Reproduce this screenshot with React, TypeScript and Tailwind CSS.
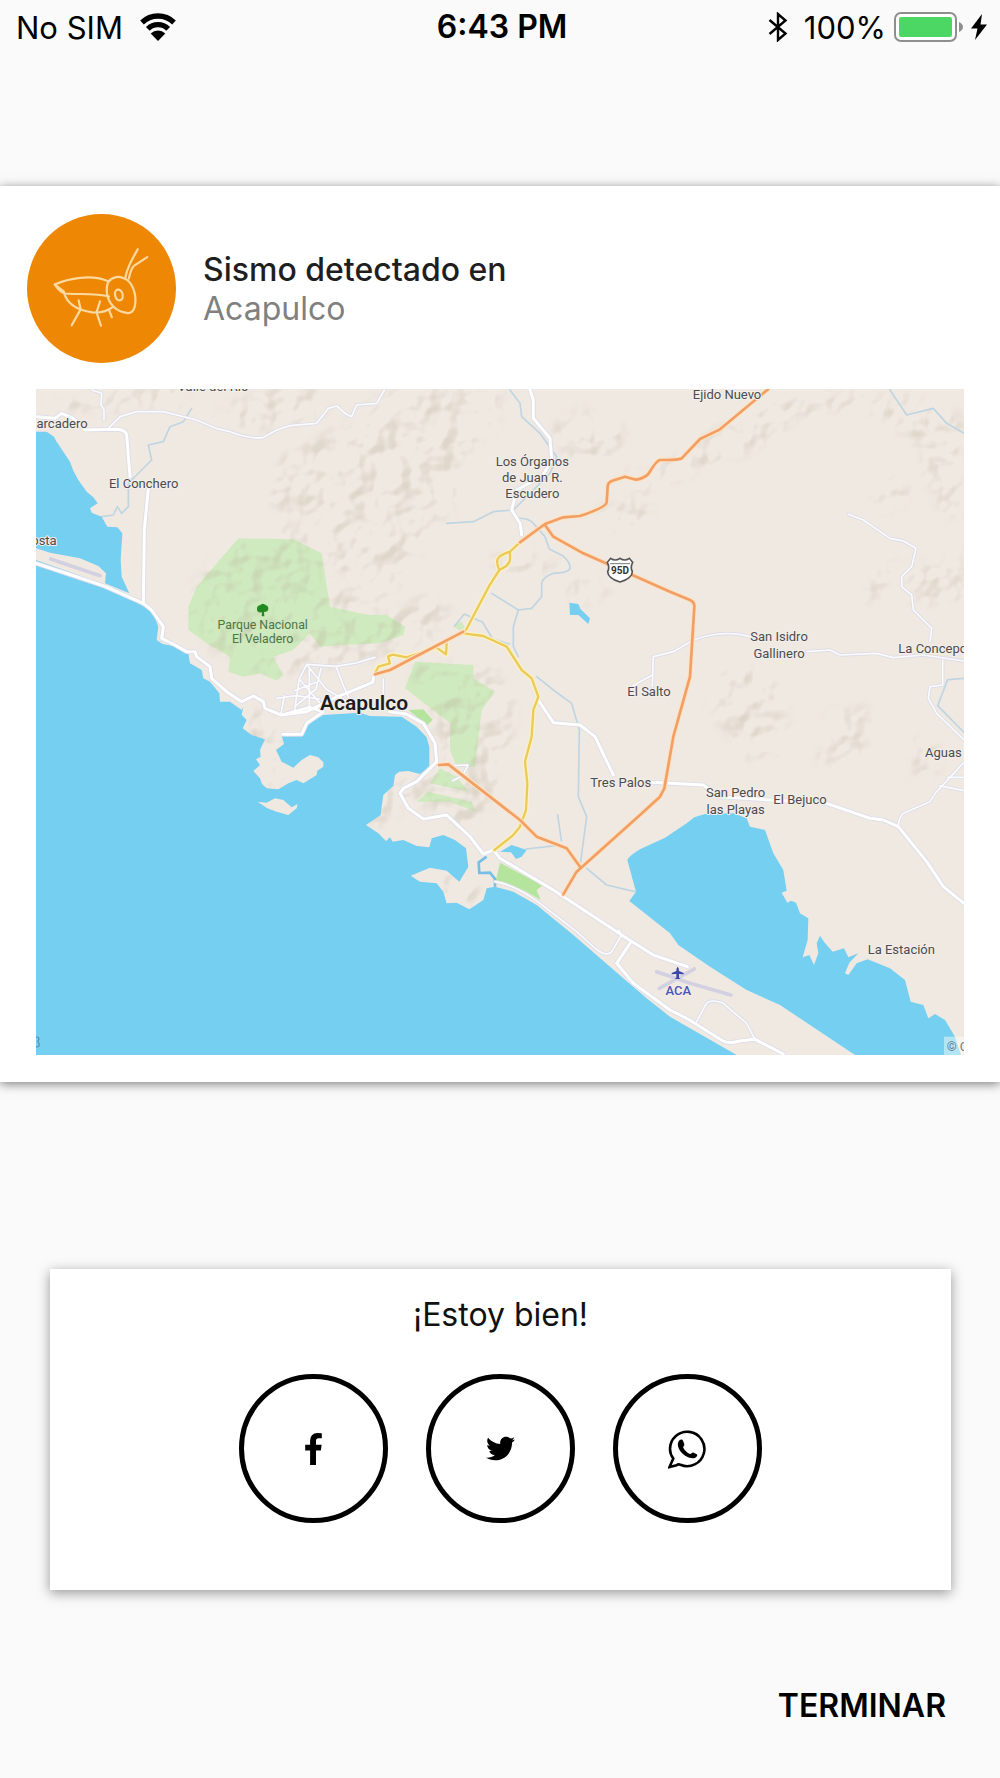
import type { ReactNode } from "react";
import { FaTwitter } from "react-icons/fa";

type LabelProps = {
  x: number;
  y: number;
  text: string;
  anchor?: "start" | "middle" | "end";
};

const labels: LabelProps[] = [
  { x: 531, y: 6, text: "Valle del Río" },
  { x: 155, y: 116, text: "arcadero", anchor: "end" },
  { x: 323, y: 298, text: "El Conchero" },
  { x: 62, y: 467, text: "osta", anchor: "end" },
  { x: 1489, y: 231, text: "Los Órganos" },
  { x: 1489, y: 279, text: "de Juan R." },
  { x: 1489, y: 328, text: "Escudero" },
  { x: 2073, y: 29, text: "Ejido Nuevo" },
  { x: 2229, y: 756, text: "San Isidro" },
  { x: 2229, y: 806, text: "Gallinero" },
  { x: 2587, y: 791, text: "La Concepc", anchor: "start" },
  { x: 1839, y: 921, text: "El Salto" },
  { x: 1754, y: 1193, text: "Tres Palos" },
  { x: 2099, y: 1225, text: "San Pedro" },
  { x: 2099, y: 1274, text: "las Playas" },
  { x: 2292, y: 1245, text: "El Bejuco" },
  { x: 2667, y: 1105, text: "Aguas", anchor: "start" },
  { x: 2596, y: 1694, text: "La Estación" },
];

const hills = [
  "M60 0H460L400 70L300 60L180 80L90 60Z",
  "M540 60L700 0H860L880 60L800 110L640 130Z",
  "M700 330L740 200L860 140L960 90L1060 0H1400L1380 120L1260 230L1300 330L1180 420L1130 560L1010 650L900 560L860 420L740 370Z",
  "M440 640L520 520L607 448L772 400L900 460L900 560L990 640L1107 690L1060 800L900 830L700 860L520 780Z",
  "M1160 620L1250 660L1180 760L980 790L1000 720Z",
  "M1540 120L1640 60L1790 130L1690 240L1600 220Z",
  "M1750 260L1900 210L1990 150L2200 40L2480 10L2520 40L2300 80L2160 180L2000 240L1800 320Z",
  "M1690 360L1830 300L1850 400L1760 480Z",
  "M1350 500L1540 490L1560 550L1400 560Z",
  "M1600 570L1760 570L1680 640L1590 630Z",
  "M2440 30L2600 10L2784 80V420L2700 350L2640 170L2560 100Z",
  "M2500 330L2570 260L2630 300L2560 380Z",
  "M2480 590L2580 480L2570 560L2500 650Z",
  "M2600 540L2784 500V640L2640 650Z",
  "M2050 860L2180 820L2260 960L2240 1090L2120 1110L2020 960Z",
  "M2380 970L2500 950L2480 1100L2340 1130Z",
  "M2620 1020L2720 1080L2690 1190L2630 1160Z",
  "M1120 820L1380 840L1440 960L1400 1180L1330 1330L1220 1290L1120 1240L1020 1330L1000 1290L1060 1180L1220 1140L1200 1020Z",
  "M1130 1450L1220 1440L1340 1500L1300 1560L1230 1520Z",
  "M620 980L690 940L740 1050L720 1180L680 1190L640 1060Z",
];

// Minor roads, drawn thin with a lilac casing
const streets = [
  "M167 3L197 13L195 48L204 62V93",
  "M217 118L252 83L302 68H382L482 93L540 118L582 128Q640 150 680 146L722 123L762 110L842 103L877 58L902 51L930 75L947 83L962 48L1022 43L1045 3",
  "M2437 376L2482 393L2562 448L2602 456L2640 478L2627 533L2597 563V593L2627 618L2632 663L2687 718L2682 758",
  "M1790 890L1849 858M1849 893L1852 803L1912 788L1972 753Q2062 720 2142 743",
  "M2312 788L2382 783L2412 798L2522 793L2572 806L2662 798L2784 816",
  "M2720 813V888L2682 893L2677 928L2702 973L2784 1053",
  "M2587 1308Q2590 1282 2602 1273L2682 1238L2700 1210L2784 1120M2710 1190L2784 1205M2735 1165H2784",
  "M1982 1898L2010 1845Q2024 1828 2062 1843L2132 1903L2157 1951",
  "M1377 1478Q1440 1488 1512 1543L1622 1628L1680 1680Q1712 1705 1727 1688L1757 1638L1748 1622",
  "M775 968L790 870L812 826L900 832L960 822L1017 805M812 826L870 900L930 935M790 870L850 940M775 905L840 880M820 840V960M855 838L840 900L780 950M900 832L922 890L940 930M722 928L780 920L850 930M735 975L745 920M1042 870V925",
  "M1250 1130L1296 1128L1280 1160L1250 1175",
];

const roads = [
  "M0 83L57 88L77 73L112 88L147 123L242 121Q268 122 272 138L282 263",
  "M337 298L325 423L322 643L347 663L382 713L377 748L417 768L452 788L477 788L482 803L522 833L527 868L572 908L617 938L652 921L682 938L687 958L735 978L812 968L900 925L1010 880L1014 860",
  "M0 523L112 560L207 592L322 643",
  "M740 1036H797L812 1003L862 968L820 955L740 978",
  "M1060 968L1110 975L1162 1003L1197 1063L1202 1118L1142 1178L1102 1198L1092 1213L1117 1258L1162 1290L1232 1278L1302 1343L1342 1395L1372 1383L1392 1408L1552 1503L1772 1648L1852 1698L1954 1733",
  "M1782 1663L1742 1723L1792 1783L1902 1863L1952 1888L2060 1955Q2077 1966 2110 1956L2157 1951L2242 1995",
  "M1507 933L1552 1001L1632 1008L1677 1043L1732 1158",
  "M1847 1180L2002 1188L2052 1223L2202 1233L2372 1243L2502 1288L2542 1293L2587 1313L2672 1418L2722 1493L2784 1543",
  "M1482 3L1492 33V88L1542 148L1547 213L1520 260L1442 303L1427 363L1452 403L1457 438",
];

const rivers = [
  "M467 58L442 98L402 113L382 158L337 168L347 213L302 258L277 283V353L257 373L244 353L232 378L197 383",
  "M1422 3L1452 43L1457 83L1512 133L1562 203L1542 253L1432 363L1372 368L1312 398L1232 403",
  "M1442 388Q1478 386 1492 403L1527 443L1540 480L1580 500Q1604 520 1602 538Q1598 552 1552 553Q1520 565 1517 583V623L1487 658L1447 663L1432 713V773L1447 803",
  "M1367 613L1447 663M1255 712L1285 675L1340 700L1370 750L1420 765",
  "M1502 863L1552 903L1607 943L1630 1023L1627 1223L1652 1283L1634 1418",
  "M1652 1438L1712 1488L1797 1508M1565 1278L1576 1355M1470 1380L1560 1370",
  "M2562 3L2612 78L2692 58L2732 103L2784 133",
  "M2784 868L2735 872L2705 950L2784 1030",
];

const highways = [
  "M2197 0L2052 121L1992 150L1937 208Q1930 213 1872 213Q1862 214 1837 255Q1825 268 1800 272L1767 263L1727 276Q1715 281 1715 293L1712 340Q1710 355 1632 381L1582 385L1527 405L1452 460",
  "M1527 408L1552 443L1642 493L1902 608L1962 633Q1976 640 1975 653L1962 863L1912 1043L1885 1198L1872 1223L1812 1278L1622 1448L1582 1516",
  "M1209 1128L1237 1126L1452 1293L1502 1343L1592 1378L1632 1433",
  "M1017 856L1062 843L1282 728",
];

const avenues = [
  "M1452 460L1422 488V515Q1418 530 1390 543L1360 590L1290 723M1422 488Q1390 498 1385 510T1390 543",
  "M1282 733L1342 741L1412 773L1457 843L1487 868L1507 923L1492 963L1487 1043L1467 1118L1474 1183L1470 1263L1452 1313L1430 1340L1375 1383",
  "M1017 853L1027 833L1062 823L1056 802L1070 797L1112 805L1202 776L1230 796L1232 761",
];

const Lines = ({ paths, color, width }: { paths: string[]; color: string; width: number }) => (
  <g fill="none" stroke={color} strokeWidth={width} strokeLinecap="round" strokeLinejoin="round">
    {paths.map((d) => (
      <path key={d} d={d} />
    ))}
  </g>
);

const AcapulcoMap = () => {
  return (
    <svg viewBox="0 0 2784 1998" className="block h-auto w-full" role="img" aria-label="Mapa de Acapulco">
      <defs>
        {/* Hill shading: lit noise, kept only where it is darker than flat ground */}
        <filter id="relief" x="-5%" y="-5%" width="110%" height="110%" colorInterpolationFilters="sRGB">
          <feTurbulence type="fractalNoise" baseFrequency="0.009" numOctaves="3" seed="8" result="noise" />
          <feDiffuseLighting in="noise" surfaceScale="60" diffuseConstant="1" lightingColor="#fff" result="lit">
            <feDistantLight azimuth="225" elevation="50" />
          </feDiffuseLighting>
          <feColorMatrix
            in="lit"
            type="matrix"
            values="0 0 0 0 0.72  0 0 0 0 0.69  0 0 0 0 0.6  -1.1 0 0 0 0.76"
            result="tint"
          />
          <feGaussianBlur in="SourceAlpha" stdDeviation="16" result="soft" />
          <feComposite in="tint" in2="soft" operator="in" />
        </filter>
      </defs>

      <rect width="2784" height="1998" fill="#f0e9e2" />

      <g fill="#d0eabf">
        <path d="M607 448L772 451L857 493L882 653L972 673L1002 678H1052L1107 713L1102 738L1032 763L922 768L852 773L822 733L772 783L712 803L742 858L722 875L672 853L622 863L577 848L582 803L512 763L457 723V653L482 593Z" />
        <path d="M1137 818L1312 828V868L1377 908L1337 963L1317 1133H1262L1242 1083V1003L1107 898Z" />
        <path d="M1212 1138L1262 1163L1297 1208L1182 1183Z" />
        <path d="M1177 1208L1307 1238L1320 1268L1242 1238H1142Z" />
        <path d="M1255 712L1275 697L1287 715L1270 725Z" />
      </g>
      <g fill="#b5e59d">
        <path d="M1117 963L1162 961L1190 993L1174 1008Z" />
        <path d="M1392 1421L1442 1448L1522 1488L1502 1503L1514 1533L1472 1508L1447 1498L1380 1473Z" />
      </g>

      <g filter="url(#relief)" opacity="0.42">
        {hills.map((d) => (
          <path key={d} d={d} />
        ))}
      </g>

      <Lines paths={rivers} color="#bfd5e2" width={5} />

      <g fill="#75cff1">
        <path d="M0 128H32L54 143L60 155L77 181L102 218L112 245L127 273L152 308L172 325L185 343L162 358L167 371L197 383L214 413L244 415L259 433L254 513L257 563L280 613L207 583L210 553L187 531L132 508L42 491L0 478Z" />
        <path d="M0 513L112 553L207 588L282 628L350 668L367 713L362 753L380 765L412 771L457 793L462 823L497 843L502 868L522 878L550 913L552 938L582 938L617 963L622 953L617 978L632 993L620 1018L647 1038L687 1051L672 1083L674 1103L660 1111L672 1128L652 1146L672 1168L678 1185L692 1198L727 1201L757 1183L782 1173L802 1183L842 1158L844 1145L862 1133L862 1120L847 1105L822 1098L797 1113L772 1136L737 1118L720 1083L744 1065L737 1040L797 1040L812 1005L862 978L972 971L1002 981L1097 983L1142 1013L1172 1045L1180 1075V1133L1152 1155L1117 1146L1090 1148L1077 1158L1072 1191L1042 1218L1037 1253L1034 1278L990 1308L1027 1333L1050 1356L1062 1345L1070 1358L1102 1353L1142 1371L1180 1375L1187 1348L1222 1338L1257 1353L1290 1378L1297 1433L1270 1478L1232 1445L1182 1436L1124 1460L1152 1478L1202 1483L1222 1508L1232 1543L1262 1541L1300 1561L1342 1533L1352 1498L1377 1493L1432 1508L1502 1548L1612 1638L1762 1768L1832 1828L1902 1883L2102 1998H0Z" />
        <path d="M1887 1346L1952 1303L1975 1285L2007 1275L2092 1273L2132 1288L2142 1313L2187 1323L2212 1393L2242 1443L2252 1505L2237 1511L2254 1541L2266 1535L2280 1541L2292 1573L2317 1588L2315 1653L2300 1705L2320 1698L2334 1728L2347 1693L2342 1663L2352 1640L2365 1660L2390 1688L2424 1678L2437 1705L2467 1693L2440 1721L2427 1753L2437 1758L2462 1723L2495 1711L2562 1738L2607 1773L2624 1838L2662 1848L2677 1888L2697 1875L2727 1893L2757 1943L2775 1998H2457L2232 1848L2132 1803L2022 1733L1927 1668L1902 1633L1780 1536L1800 1508L1774 1413Q1780 1400 1812 1381Z" />
        <path d="M1600 641L1627 645L1634 661L1662 688L1657 705L1627 678L1602 678Z" />
        <path d="M1392 1388L1427 1368L1472 1383L1457 1403L1440 1410L1425 1390Z" />
      </g>
      <path d="M665 1238L692 1241L717 1228L742 1233L767 1255L785 1245L782 1258L757 1278L722 1268L694 1258Z" fill="#f0e9e2" />
      <path d="M1352 1403L1328 1420L1330 1452L1362 1451L1377 1470V1493" fill="none" stroke="#75bfe6" strokeWidth="8" />

      <Lines paths={streets} color="#dcdce8" width={10} />
      <Lines paths={roads} color="#dcdcea" width={14} />
      <Lines paths={streets} color="#fbfbfe" width={5} />
      <Lines paths={roads} color="#ffffff" width={9} />
      <Lines paths={["M44 510L192 560", "M1862 1748L1960 1782L2085 1818", "M1870 1798L1975 1740"]} color="#d3d0e2" width={11} />
      <Lines paths={avenues} color="#fbf3c4" width={14} />
      <Lines paths={avenues} color="#ecca58" width={7} />
      <Lines paths={highways} color="#fbe3c6" width={15} />
      <Lines paths={highways} color="#f39e62" width={8} />

      {/* 95D highway shield */}
      <path
        d="M1724 508Q1738 518 1752 508Q1766 518 1780 508L1790 520Q1782 536 1789 548Q1788 568 1752 579Q1716 568 1715 548Q1722 536 1714 520Z"
        fill="#fff"
        stroke="#555"
        strokeWidth="5"
      />
      <path d="M1722 524H1782" stroke="#777" strokeWidth="3" />
      <text x="1752" y="555" textAnchor="middle" fontSize="30" fontWeight="700" fill="#333">
        95D
      </text>

      <g
        fontSize="39"
        fill="#4b4b4f"
        stroke="#f4efea"
        strokeWidth="6"
        strokeLinejoin="round"
        className="[paint-order:stroke]"
      >
        {labels.map((label) => (
          <text key={label.text} x={label.x} y={label.y} textAnchor={label.anchor ?? "middle"}>
            {label.text}
          </text>
        ))}
        <text x="984" y="963" textAnchor="middle" fontSize="63" fontWeight="600" fill="#1d1d1f">
          Acapulco
        </text>
        <text x="1927" y="1818" textAnchor="middle" fontWeight="500" fill="#4a55b5">
          ACA
        </text>
      </g>
      <path
        d="M1925 1733Q1929 1736 1929 1746L1943 1752V1756L1929 1755V1766L1934 1770H1916L1921 1766V1755L1907 1756V1752L1921 1746Q1921 1736 1925 1733Z"
        fill="#3b47ad"
      />

      <path
        d="M677 682L678 670Q662 672 663 659Q663 650 672 649Q680 640 690 649Q698 652 697 660Q696 669 684 669L685 682Z"
        fill="#218a21"
      />
      <g fontSize="37" fill="#4c7548" textAnchor="middle">
        <text x="680" y="720">Parque Nacional</text>
        <text x="680" y="761">El Veladero</text>
      </g>

      <rect x="2724" y="1943" width="60" height="55" fill="#fff" opacity="0.45" />
      <text x="2732" y="1985" fontSize="38" fill="#6d7f88">
        © O
      </text>
      <path d="M0 1945Q10 1943 8 1952Q4 1958 8 1962Q14 1974 0 1974" fill="none" stroke="#5f94ab" strokeWidth="4" />
    </svg>
  );
};

const CricketLogo = () => (
  <svg viewBox="0 0 150 150" className="size-[149px] shrink-0" aria-hidden="true">
    <circle cx="75" cy="75" r="75" fill="#ee8704" />
    <g fill="none" stroke="#fdd9a0" strokeWidth="2.2" strokeLinecap="round" strokeLinejoin="round">
      <path d="M28 71C41 65 65 60 82.500 68M28 71C31 75 33 79 38.500 80C52 81 70 80 82.500 83" />
      <path d="M28 71L37 78C40 92 52 97 66 99C76 100 82 97 86.500 93.500" />
      <path d="M82 68C86 63 93 62 98 65C106 68 110 80 109 90C108 99 104 101 98 99C89 97 82 90 80.500 80C80 75 80.500 71 82 68Z" />
      <ellipse cx="92.500" cy="81.500" rx="3.800" ry="5.500" transform="rotate(-14 92.500 81.500)" />
      <path d="M99 64C101 54 105 47 111.500 35.500M102.500 65C104 58 105 54 108 52L121 43.500" />
      <path d="M52 87L54 96L45 112M73.500 88L70 99L74.500 112.500M82.500 96.500L85.500 104" />
    </g>
  </svg>
);

const StatusBar = () => (
  <header className="grid h-[54px] grid-cols-[1fr_auto_1fr] items-center pr-3 pl-4 text-[31px] leading-none text-black">
    <div className="flex items-center gap-4">
      <span>No SIM</span>
      <svg viewBox="0 0 38 28" className="h-7 w-[38px]" aria-label="Wi-Fi">
        <path d="M19 28L11.700 20.500A10.300 10.300 0 0 1 26.300 20.500Z" />
        <path d="M8.800 17.300A14.500 14.500 0 0 1 29.200 17.300M3 11A23 23 0 0 1 35 11" fill="none" stroke="#000" strokeWidth="5.300" transform="translate(0 -1.500)" />
      </svg>
    </div>
    <span className="text-[32px] font-semibold">6:43 PM</span>
    <div className="flex items-center justify-end">
      <svg viewBox="0 0 20 30" className="mr-4 h-[30px] w-5" fill="none" stroke="#000" strokeWidth="2.400" aria-label="Bluetooth">
        <path d="M1.500 8L17.500 21.500L10 28V2L17.500 8.500L1.500 22" />
      </svg>
      <span>100%</span>
      <svg viewBox="0 0 94 30" className="ml-2 h-[30px] w-[94px]" aria-label="Batería">
        <rect x="1" y="1" width="61" height="28" rx="6" fill="#fff" stroke="#8e8e90" strokeWidth="2" />
        <rect x="5" y="5" width="53" height="20" rx="2" fill="#4cd764" />
        <path d="M65 10Q69 12 69 15Q69 18 65 20Z" fill="#8e8e90" />
        <path d="M88 2L77 16.500H83.500L81 28L93 12.500H86.500Z" />
      </svg>
    </div>
  </header>
);

const ShareButton = ({ label, children }: { label: string; children: ReactNode }) => (
  <button
    type="button"
    aria-label={label}
    className="flex size-[149px] items-center justify-center rounded-full border-5 border-black"
  >
    {children}
  </button>
);

export default function App() {
  return (
    <div className="min-h-screen bg-[#fafafa] font-['Inter','Liberation_Sans',sans-serif]">
      <StatusBar />

      <main className="pt-[132px]">
        <section className="bg-white pb-[27px] shadow-[0_2px_10px_rgba(0,0,0,0.5)]">
          <div className="flex items-center gap-[27px] px-[27px] pt-7 pb-[26px]">
            <CricketLogo />
            <div className="text-[32px] leading-[39px]">
              <h1 className="font-medium text-[#1f1f1f]">Sismo detectado en</h1>
              <p className="text-[#808080]">Acapulco</p>
            </div>
          </div>
          <div className="px-9 font-['Roboto',sans-serif]">
            <AcapulcoMap />
          </div>
        </section>

        <section className="mr-[49px] ml-[50px] mt-[187px] bg-white pt-[26px] pb-[67px] shadow-[0_3px_12px_rgba(0,0,0,0.4)]">
          <h2 className="text-center text-[32px] leading-10 text-[#111]">¡Estoy bien!</h2>
          <div className="mt-[39px] flex justify-center gap-[38px]">
            <ShareButton label="Compartir en Facebook">
              <svg viewBox="479 0 864 1664" className="h-8 w-[17px]" aria-hidden="true">
                <path d="M1343 12v264h-157q-86 0-116 36t-30 108v189h293l-39 296h-254v759h-306v-759h-255v-296h255v-218q0-186 104-288.500t277-102.500q147 0 228 12z" />
              </svg>
            </ShareButton>
            <ShareButton label="Compartir en Twitter">
              <FaTwitter className="size-[29px]" />
            </ShareButton>
            <ShareButton label="Compartir en WhatsApp">
              <svg viewBox="0 0 40 40" className="size-10" aria-hidden="true">
                <path
                  d="M1.500 38L5.300 29.500C3 26.500 2 23.500 2 20A17.200 17.200 0 1 1 12.500 35.800Q10.500 34.800 8.500 36.200Z"
                  fill="none"
                  stroke="#000"
                  strokeWidth="2.600"
                />
                <path d="M11 11.800C12.500 10.200 14.500 10.200 15 11.700L16.400 15.200C16.700 16.500 14.900 17.500 15.200 18.400C16.800 21.400 19.300 24 22 25C23 25.200 24 23.200 25.200 23.400L28.800 25.200C30 26.200 28.600 28.400 26.700 29C22.500 30.300 17 27.500 13.500 23.600C10 19.500 8.700 14.800 11 11.800Z" />
              </svg>
            </ShareButton>
          </div>
        </section>
      </main>

      <footer className="flex justify-end pt-24 pr-[54px] pb-[51px]">
        <button type="button" className="text-[32px] leading-10 font-semibold text-black">
          TERMINAR
        </button>
      </footer>
    </div>
  );
}
